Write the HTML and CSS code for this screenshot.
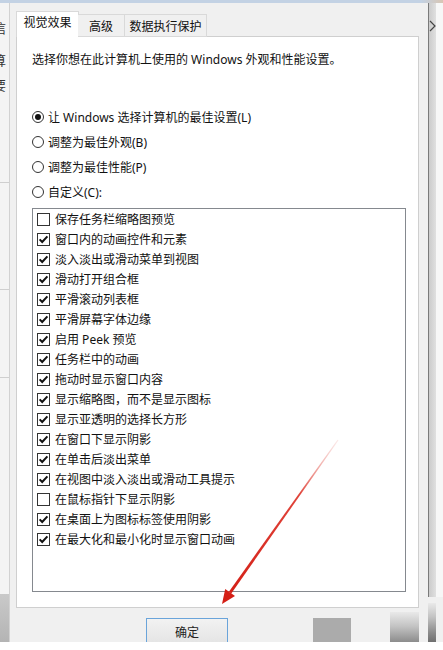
FILE: index.html
```html
<!DOCTYPE html>
<html lang="zh-CN">
<head>
<meta charset="utf-8">
<title>性能选项</title>
<link rel="stylesheet" href="styles.css">
</head>
<body>
<div class="topbar"></div>
<div class="frame">
  <div class="bg-left">
    <div class="frag f1">信</div>
    <div class="frag f2">算</div>
    <div class="frag f3">要</div>
    <div class="lsep s1"></div>
    <div class="lsep s2"></div>
    <div class="lsep s3"></div>
    <div class="lgrow"></div>
    <div class="lbottom"></div>
  </div>
  <div class="dialog">
    <div class="tabs">
      <div class="tab active">视觉效果</div>
      <div class="tab t2">高级</div>
      <div class="tab t3">数据执行保护</div>
    </div>
    <div class="panel">
      <p class="desc">选择你想在此计算机上使用的 Windows 外观和性能设置。</p>
      <div class="radios">
        <div class="radio"><span class="dot on"></span>让 Windows 选择计算机的最佳设置(L)</div>
        <div class="radio"><span class="dot"></span>调整为最佳外观(B)</div>
        <div class="radio"><span class="dot"></span>调整为最佳性能(P)</div>
        <div class="radio"><span class="dot"></span>自定义(C):</div>
      </div>
      <div class="list">
        <div class="item"><span class="cb"></span>保存任务栏缩略图预览</div>
        <div class="item"><span class="cb"><svg viewBox="0 0 11 11"><path d="M1.6 5.4 L4.2 8 L9.4 2.4"/></svg></span>窗口内的动画控件和元素</div>
        <div class="item"><span class="cb"><svg viewBox="0 0 11 11"><path d="M1.6 5.4 L4.2 8 L9.4 2.4"/></svg></span>淡入淡出或滑动菜单到视图</div>
        <div class="item"><span class="cb"><svg viewBox="0 0 11 11"><path d="M1.6 5.4 L4.2 8 L9.4 2.4"/></svg></span>滑动打开组合框</div>
        <div class="item"><span class="cb"><svg viewBox="0 0 11 11"><path d="M1.6 5.4 L4.2 8 L9.4 2.4"/></svg></span>平滑滚动列表框</div>
        <div class="item"><span class="cb"><svg viewBox="0 0 11 11"><path d="M1.6 5.4 L4.2 8 L9.4 2.4"/></svg></span>平滑屏幕字体边缘</div>
        <div class="item"><span class="cb"><svg viewBox="0 0 11 11"><path d="M1.6 5.4 L4.2 8 L9.4 2.4"/></svg></span>启用 Peek 预览</div>
        <div class="item"><span class="cb"><svg viewBox="0 0 11 11"><path d="M1.6 5.4 L4.2 8 L9.4 2.4"/></svg></span>任务栏中的动画</div>
        <div class="item"><span class="cb"><svg viewBox="0 0 11 11"><path d="M1.6 5.4 L4.2 8 L9.4 2.4"/></svg></span>拖动时显示窗口内容</div>
        <div class="item"><span class="cb"><svg viewBox="0 0 11 11"><path d="M1.6 5.4 L4.2 8 L9.4 2.4"/></svg></span>显示缩略图，而不是显示图标</div>
        <div class="item"><span class="cb"><svg viewBox="0 0 11 11"><path d="M1.6 5.4 L4.2 8 L9.4 2.4"/></svg></span>显示亚透明的选择长方形</div>
        <div class="item"><span class="cb"><svg viewBox="0 0 11 11"><path d="M1.6 5.4 L4.2 8 L9.4 2.4"/></svg></span>在窗口下显示阴影</div>
        <div class="item"><span class="cb"><svg viewBox="0 0 11 11"><path d="M1.6 5.4 L4.2 8 L9.4 2.4"/></svg></span>在单击后淡出菜单</div>
        <div class="item"><span class="cb"><svg viewBox="0 0 11 11"><path d="M1.6 5.4 L4.2 8 L9.4 2.4"/></svg></span>在视图中淡入淡出或滑动工具提示</div>
        <div class="item"><span class="cb"></span>在鼠标指针下显示阴影</div>
        <div class="item"><span class="cb"><svg viewBox="0 0 11 11"><path d="M1.6 5.4 L4.2 8 L9.4 2.4"/></svg></span>在桌面上为图标标签使用阴影</div>
        <div class="item"><span class="cb"><svg viewBox="0 0 11 11"><path d="M1.6 5.4 L4.2 8 L9.4 2.4"/></svg></span>在最大化和最小化时显示窗口动画</div>
      </div>
    </div>
    <div class="footer">
      <div class="btn">确定</div>
      <div class="ghost-btn"></div>
      <div class="ghost-grad"></div>
    </div>
  </div>
  <div class="bg-right">
    <div class="band">
      <div class="band-line"></div>
      <div class="band-gray">
        <svg class="chev" viewBox="0 0 7 12"><path d="M1 1 L6 6 L1 11"/></svg>
      </div>
      <div class="band-white"></div>
    </div>
    <div class="band-foot">
      <div class="ghost-grad tail"></div>
    </div>
  </div>
</div>
<svg class="arrow" viewBox="0 0 443 650" width="443" height="650">
  <defs>
    <linearGradient id="ag" x1="338" y1="440" x2="228" y2="595" gradientUnits="userSpaceOnUse">
      <stop offset="0" stop-color="#f2b8b4" stop-opacity="0.3"/>
      <stop offset="0.35" stop-color="#e0443a"/>
      <stop offset="1" stop-color="#d41f16"/>
    </linearGradient>
  </defs>
  <polygon points="338.5,440.3 337.5,439.7 228.9,591.7 231.3,593.5" fill="url(#ag)"/>
  <polygon points="222,604 225.2,589.1 235,596.1" fill="#d41f16"/>
</svg>
</body>
</html>
```

FILE: styles.css
```css
* { box-sizing: border-box; }

html, body {
  margin: 0;
  padding: 0;
}

body {
  width: 443px;
  height: 650px;
  overflow: hidden;
  position: relative;
  background: #ffffff;
  font-family: "Noto Sans", "Noto Sans CJK SC", sans-serif;
  font-size: 12px;
  color: #111;
}

.topbar {
  height: 3px;
  background: linear-gradient(to right, #c3d2e4 0%, #c3d2e4 95%, #d8c6b4 100%);
}

.frame {
  display: flex;
  height: 639px;
}

/* background window on the left */
.bg-left {
  width: 10px;
  display: flex;
  flex-direction: column;
  background: #f4f4f4;
  border-right: 1px solid #d2d2d2;
  overflow: hidden;
}

.frag {
  height: 16px;
  line-height: 16px;
  font-size: 13px;
  white-space: nowrap;
  text-indent: -7px;
  color: #333;
  font-family: "Noto Sans CJK SC", sans-serif;
}

.f1 { margin-top: 17px; }
.f2 { margin-top: 16px; }
.f3 { margin-top: 9px; }

.lsep {
  height: 1px;
  background: #cfcfcf;
}

.s1 { margin-top: 89px; }
.s2 { margin-top: 106px; }
.s3 { margin-top: 87px; }

.lgrow { flex: 1; }

.lbottom {
  height: 48px;
  background: linear-gradient(to bottom, #c9c9c9, #b4b4b4);
}

/* dialog */
.dialog {
  width: 418px;
  display: flex;
  flex-direction: column;
  background: #f0f0f0;
  padding: 8px 9px 0 6px;
}

.tabs {
  display: flex;
  align-items: flex-end;
  height: 26px;
  margin-bottom: -1px;
  position: relative;
  z-index: 1;
}

.tab {
  height: 23px;
  line-height: 21px;
  padding-top: 1px;
  text-align: center;
  background: #f0f0f0;
  border: 1px solid #d9d9d9;
  white-space: nowrap;
}

.tab.active {
  width: 63px;
  height: 26px;
  line-height: 21px;
  padding-top: 0;
  background: #ffffff;
  border-bottom: none;
}

.tab.t2 {
  width: 47px;
  margin-left: -1px;
  border-left: none;
}

.tab.t3 {
  width: 83px;
  margin-left: -1px;
}

.panel {
  width: 403px;
  height: 572px;
  background: #ffffff;
  border: 1px solid #cfcfcf;
  padding: 15px 0 0 15px;
}

.desc {
  margin: 0;
  line-height: 16px;
  white-space: nowrap;
}

.radios {
  margin-top: 36px;
  display: flex;
  flex-direction: column;
}

.radio {
  height: 25px;
  display: flex;
  align-items: center;
  gap: 4px;
  white-space: nowrap;
}

.dot {
  width: 12px;
  height: 12px;
  border: 1px solid #333;
  border-radius: 50%;
  background: #fff;
  display: flex;
  align-items: center;
  justify-content: center;
  flex: none;
}

.dot.on::after {
  content: "";
  width: 6px;
  height: 6px;
  border-radius: 50%;
  background: #111;
}

.list {
  margin-top: 4px;
  width: 374px;
  height: 384px;
  border: 1px solid #85898f;
  background: #fff;
  padding: 0 0 0 4px;
  display: flex;
  flex-direction: column;
}

.item {
  height: 20px;
  display: flex;
  align-items: center;
  gap: 5px;
  white-space: nowrap;
}

.cb {
  width: 13px;
  height: 13px;
  border: 1px solid #333;
  background: #fff;
  flex: none;
  display: flex;
}

.cb svg {
  width: 11px;
  height: 11px;
}

.cb path {
  fill: none;
  stroke: #111;
  stroke-width: 2;
}

/* footer */
.footer {
  height: 34px;
  padding-top: 10px;
  display: flex;
  align-items: flex-start;
  overflow: hidden;
}

.btn {
  margin-left: 130px;
  width: 87px;
  height: 27px;
  border: 1px solid #6aa4da;
  background: linear-gradient(to bottom, #f2f2f2, #e4e4e4);
  text-align: center;
  line-height: 25px;
  font-family: "Noto Sans CJK SC", sans-serif;
  color: #222;
}

.ghost-btn {
  margin-left: 85px;
  width: 40px;
  height: 26px;
  background: #ababab;
}

.ghost-grad {
  margin-left: 39px;
  margin-top: -6px;
  width: 31px;
  height: 40px;
  background: linear-gradient(to bottom, #e9e9e9 0%, #c4c4c4 35%, #8c8c8c 75%, #6f6f6f 100%);
}

/* background window on the right */
.bg-right {
  width: 15px;
  display: flex;
  flex-direction: column;
}

.band {
  height: 594px;
  display: flex;
}

.band-line {
  width: 1px;
  background: #7a7a7a;
}

.band-gray {
  width: 7px;
  background: linear-gradient(to right, #cbcbcb, #e0e0e0);
  padding-top: 17px;
}

.chev {
  display: block;
  width: 7px;
  height: 12px;
}

.chev path {
  fill: none;
  stroke: #444;
  stroke-width: 1.2;
}

.band-white {
  flex: 1;
  background: #f7f7f7;
}

.band-foot {
  flex: 1;
  background: #f0f0f0;
  padding-top: 6px;
}

.ghost-grad.tail {
  margin: 0;
  width: 8px;
  height: 39px;
}

.arrow {
  position: absolute;
  left: 0;
  top: 0;
  pointer-events: none;
}
```
